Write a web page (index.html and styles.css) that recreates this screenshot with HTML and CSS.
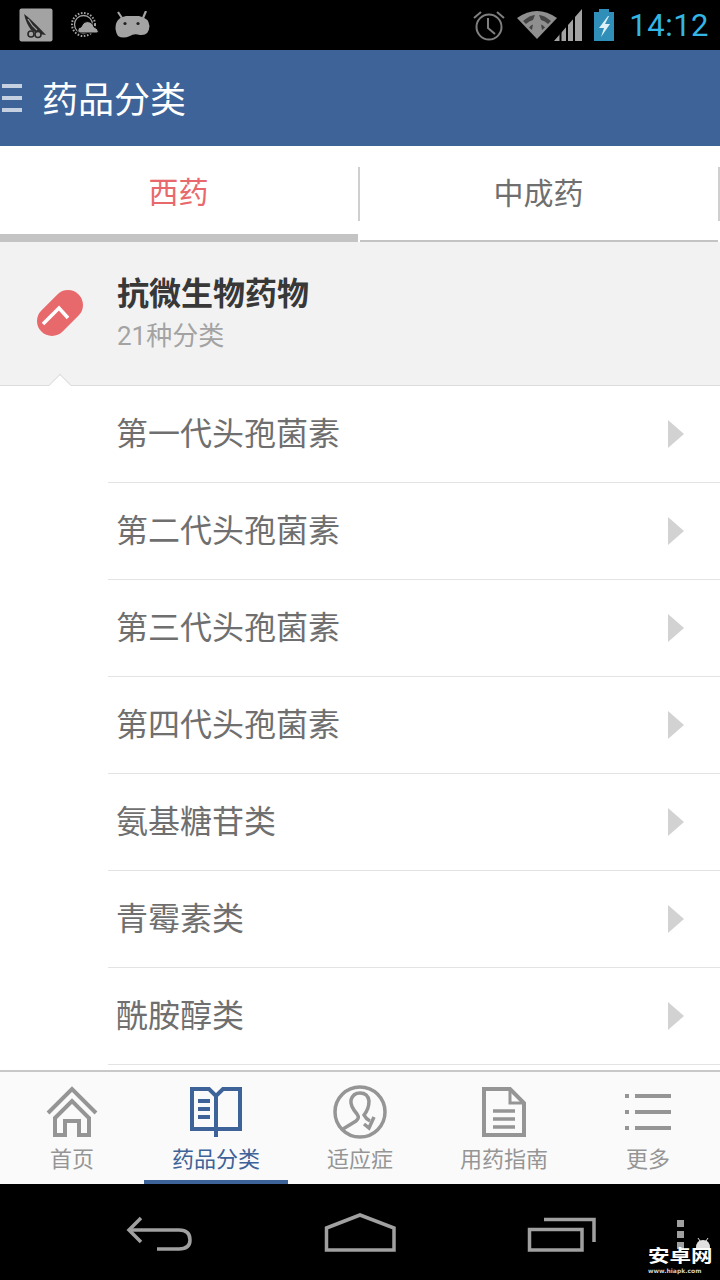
FILE: index.html
```html
<!DOCTYPE html>
<html lang="zh-CN">
<head>
    <meta charset="UTF-8">
    <meta name="viewport" content="width=device-width, initial-scale=1.0">
    <title>药品分类</title>
    <link rel="stylesheet" href="styles.css">
</head>
<body>
    <div class="screen">
        <div class="status">
            <div class="status-left">
                <svg width="34" height="34" viewBox="0 0 34 34">
                    <rect x="0.5" y="0.5" width="33" height="33" rx="2" fill="#a3a3a3"/>
                    <path d="M5 6 Q11 10 27 27 L20 26 L12 22 Q7 15 5 6Z" fill="#2a2a2a"/>
                    <path d="M9 11 Q13 18 18 22" fill="none" stroke="#a3a3a3" stroke-width="1.200"/>
                    <circle cx="12" cy="26" r="3" fill="#a3a3a3" stroke="#2a2a2a" stroke-width="1.600"/>
                    <circle cx="19" cy="26.500" r="3" fill="#a3a3a3" stroke="#2a2a2a" stroke-width="1.600"/>
                </svg>
                <svg class="weather" width="28" height="26" viewBox="0 0 28 26">
                    <circle cx="12.500" cy="12.500" r="11.500" fill="none" stroke="#a3a3a3" stroke-width="2" stroke-dasharray="1.600 1.600"/>
                    <circle cx="12.500" cy="12.500" r="9" fill="#000" stroke="#a3a3a3" stroke-width="1.300"/>
                    <path d="M7 20 Q6 16 10 15 Q13 8 19 10 Q23 12 23 15 Q27 16 27.500 20 L26 21 H9Z" fill="#a3a3a3" stroke="#000" stroke-width="1"/>
                </svg>
                <svg class="droid" width="35" height="28" viewBox="0 0 35 28">
                    <path d="M3 1 L7 7 M31 0 L28 7" stroke="#a3a3a3" stroke-width="2.200"/>
                    <path d="M0.500 18 Q0 7 11 5 L24 5 Q34 7 34.500 15 Q34 25 25 24 Q19 22 15 25 Q8 28 3 25 Q1 22 0.500 18Z" fill="#a3a3a3"/>
                    <circle cx="10" cy="12.500" r="1.600" fill="#222"/>
                    <circle cx="23" cy="12.500" r="1.600" fill="#222"/>
                </svg>
            </div>
            <div class="status-right">
                <svg width="32" height="32" viewBox="0 0 32 32">
                    <circle cx="16" cy="18" r="12.500" fill="none" stroke="#7f7f7f" stroke-width="2"/>
                    <path d="M15 9 L15 19 L22 25" fill="none" stroke="#7f7f7f" stroke-width="2"/>
                    <path d="M1 9 L8 3 M31 9 L24 3" stroke="#7f7f7f" stroke-width="2"/>
                </svg>
                <svg class="wifi" width="40" height="30" viewBox="0 0 40 30">
                    <path d="M0 8 Q20 -6 40 8 L20 29Z" fill="#8f8f8f"/>
                    <path d="M6 11 Q13 5 18 5 L16 10 Q12 11 9 14Z M34 11 Q27 5 22 5 L24 10 Q28 11 31 14Z M12 17.500 Q14 15 16 14.500 L15 20Z M28 17.500 Q26 15 24 14.500 L25 20Z" fill="#444"/>
                </svg>
                <svg class="signal" width="28" height="32" viewBox="0 0 28 32">
                    <path d="M0 32 L28 0 L28 32Z" fill="#a3a3a3"/>
                    <path d="M6.500 32 V22 M13 32 V16 M20 32 V7" stroke="#000" stroke-width="2"/>
                </svg>
                <svg class="battery" width="22" height="32" viewBox="0 0 22 32">
                    <path d="M6 0 H16 V3 H21 V32 H1 V3 H6Z" fill="#2f8fb8"/>
                    <path d="M15 7 L6 19 H11 L8 28 L17 15 H12 L16 7Z" fill="#dff1f8"/>
                </svg>
                <span class="clock">14:12</span>
            </div>
        </div>

        <div class="appbar">
            <div class="menu-bars"><i></i><i></i><i></i></div>
            <h1 class="appbar-title">药品分类</h1>
        </div>

        <div class="tabs">
            <div class="tab tab-on"><span>西药</span></div>
            <div class="tab"><span>中成药</span></div>
        </div>

        <div class="group-head">
            <svg class="pill" width="48" height="48" viewBox="0 0 48 48">
                <path d="M16 32 L32 16" stroke="#e8696b" stroke-width="30" stroke-linecap="round"/>
                <path d="M7 35 L23 19 L32 29" fill="none" stroke="#fff" stroke-width="3.500"/>
            </svg>
            <div class="group-text">
                <div class="group-name">抗微生物药物</div>
                <div class="group-count">21种分类</div>
            </div>
            <span class="notch"></span>
        </div>

        <ul class="list">
            <li class="row"><span class="row-text">第一代头孢菌素</span><span class="arrow"></span></li>
            <li class="row"><span class="row-text">第二代头孢菌素</span><span class="arrow"></span></li>
            <li class="row"><span class="row-text">第三代头孢菌素</span><span class="arrow"></span></li>
            <li class="row"><span class="row-text">第四代头孢菌素</span><span class="arrow"></span></li>
            <li class="row"><span class="row-text">氨基糖苷类</span><span class="arrow"></span></li>
            <li class="row"><span class="row-text">青霉素类</span><span class="arrow"></span></li>
            <li class="row"><span class="row-text">酰胺醇类</span><span class="arrow"></span></li>
        </ul>

        <div class="nav">
            <div class="nav-item">
                <svg width="54" height="54" viewBox="0 0 54 54" fill="none" stroke="#959595" stroke-width="4">
                    <path d="M3 28 L27 4 L51 28"/>
                    <path d="M10 33 L27 16 L44 33 V50 H34 V36 H20 V50 H10Z"/>
                </svg>
                <span>首页</span>
            </div>
            <div class="nav-item nav-on">
                <svg width="54" height="54" viewBox="0 0 54 54" fill="none" stroke="#3d6398" stroke-width="4">
                    <path d="M3 4 H20 L27 11 L34 4 H51 V44 H3Z"/>
                    <path d="M27 11 V52"/>
                    <path d="M9 16 H21 M9 24 H21 M9 32 H21"/>
                </svg>
                <span>药品分类</span>
            </div>
            <div class="nav-item">
                <svg width="54" height="54" viewBox="0 0 54 54" fill="none" stroke="#959595" stroke-width="3.500">
                    <circle cx="27" cy="27" r="25"/>
                    <path d="M10 44 L23 36 Q27 33 24 29 Q17 21 18 15 Q20 8 27 8 Q35 8 36 16 Q36 24 31 30 Q33 34 37 36"/>
                    <path d="M31 39 L36 43 L41 32"/>
                </svg>
                <span>适应症</span>
            </div>
            <div class="nav-item">
                <svg width="54" height="54" viewBox="0 0 54 54" fill="none" stroke="#959595" stroke-width="4">
                    <path d="M7 4 H33 L47 18 V50 H7Z"/>
                    <path d="M33 4 V18 H47" stroke-width="3"/>
                    <path d="M16 26 H38 M16 34 H38 M16 42 H38" stroke-width="3.500"/>
                </svg>
                <span>用药指南</span>
            </div>
            <div class="nav-item">
                <svg width="54" height="54" viewBox="0 0 54 54" fill="#959595">
                    <rect x="4" y="9" width="4" height="4"/><rect x="14" y="9" width="36" height="4"/>
                    <rect x="4" y="25" width="4" height="4"/><rect x="14" y="25" width="36" height="4"/>
                    <rect x="4" y="41" width="4" height="4"/><rect x="14" y="41" width="36" height="4"/>
                </svg>
                <span>更多</span>
            </div>
        </div>

        <div class="softkeys">
            <svg width="68" height="40" viewBox="0 0 68 40" fill="none" stroke="#a0a0a0" stroke-width="3.500">
                <path d="M16 6 L4 18 L16 30"/>
                <path d="M4 18 H54 Q65 18 65 28 Q65 37 54 37 H32"/>
            </svg>
            <svg width="72" height="40" viewBox="0 0 72 40" fill="none" stroke="#a0a0a0" stroke-width="3.500">
                <path d="M2.500 16 L36 3 L70 16 V38 H2.500Z"/>
            </svg>
            <svg width="70" height="40" viewBox="0 0 70 40" fill="none" stroke="#a0a0a0" stroke-width="3.500">
                <path d="M2.500 17.500 H55 V38 H2.500Z"/>
                <path d="M17 7.500 H67 V30"/>
            </svg>
            <div class="overflow-dots"><i></i><i></i><i></i></div>
            <div class="watermark">
                <svg class="wm-droid" width="16" height="10" viewBox="0 0 16 10">
                    <path d="M1 10 Q1 2 8 2 Q15 2 15 10Z" fill="#e0e0e0"/>
                    <path d="M3 0 L5 3 M13 0 L11 3" stroke="#e0e0e0" stroke-width="1"/>
                </svg>
                <span class="wm-name">安卓网</span>
                <span class="wm-url">www.hiapk.com</span>
            </div>
        </div>
    </div>
</body>
</html>
```
FILE: styles.css
```css
* {
    box-sizing: border-box;
}
html, body {
    margin: 0;
    padding: 0;
}
body {
    font-family: "Roboto", "Noto Sans CJK SC", sans-serif;
    background: #000;
}
.screen {
    width: 720px;
    height: 1280px;
    display: flex;
    flex-direction: column;
    overflow: hidden;
    background: #fff;
}

/* status bar */
.status {
    flex: 0 0 50px;
    background: #000;
    display: flex;
    justify-content: space-between;
    align-items: center;
    padding: 0 11px 0 19px;
}
.status-left {
    display: flex;
    align-items: center;
}
.weather {
    margin-left: 18px;
}
.droid {
    margin-left: 16px;
}
.status-right {
    display: flex;
    align-items: center;
}
.wifi {
    margin-left: 12px;
    margin-right: -3px;
}
.battery {
    margin-left: 11px;
}
.clock {
    margin-left: 14px;
    font-size: 31px;
    letter-spacing: 0.5px;
    color: #33b5e5;
}

/* app bar */
.appbar {
    flex: 0 0 96px;
    background: #3d6398;
    display: flex;
    align-items: center;
    padding-left: 2px;
}
.menu-bars {
    width: 20px;
    display: flex;
    flex-direction: column;
    gap: 8px;
}
.menu-bars i {
    display: block;
    height: 4px;
    background: #c5d0e0;
}
.appbar-title {
    margin: 0 0 2px 20px;
    font-size: 36px;
    font-weight: 400;
    color: #fff;
}

/* tabs */
.tabs {
    flex: 0 0 96px;
    display: flex;
    background: #fff;
}
.tab {
    width: 360px;
    height: 96px;
    display: flex;
    align-items: center;
    justify-content: center;
    padding: 0 3px 4px 0;
    font-size: 30px;
    color: #6f6f6f;
    position: relative;
    border-bottom: 2px solid #c4c4c4;
}
.tab:before {
    content: "";
    position: absolute;
    right: 0;
    top: 21px;
    width: 2px;
    height: 54px;
    background: #cfcfcf;
}
.tab:after {
    content: "";
    position: absolute;
    right: 0;
    bottom: -2px;
    width: 2px;
    height: 2px;
    background: #fff;
}
.tab-on {
    color: #e8696b;
    padding: 0 3px 0 0;
    border-bottom: 8px solid #c4c4c4;
}
.tab-on:after {
    height: 8px;
    bottom: -8px;
}

/* group header */
.group-head {
    flex: 0 0 144px;
    background: #f2f2f2;
    border-bottom: 1px solid #dcdcdc;
    display: flex;
    align-items: center;
    padding-left: 36px;
    position: relative;
}
.pill {
    flex: none;
    margin-bottom: 2px;
}
.group-text {
    margin-left: 33px;
}
.group-name {
    font-size: 32px;
    font-weight: 700;
    line-height: 44px;
    color: #383838;
}
.group-count {
    margin-top: 1px;
    font-size: 26px;
    line-height: 38px;
    color: #a3a3a3;
}
.notch {
    position: absolute;
    left: 52px;
    bottom: -8px;
    width: 16px;
    height: 16px;
    background: #fff;
    border-left: 1px solid #dcdcdc;
    border-top: 1px solid #dcdcdc;
    transform: rotate(45deg);
}

/* list */
.list {
    flex: 1;
    margin: 0;
    padding: 0 0 0 108px;
    list-style: none;
    overflow: hidden;
}
.row {
    height: 97px;
    display: flex;
    align-items: center;
    justify-content: space-between;
    padding: 0 36px 0 8px;
    border-bottom: 1px solid #e3e3e3;
    font-size: 32px;
    color: #6f6f6f;
}
.row-text {
    margin-bottom: 6px;
}
.arrow {
    width: 0;
    height: 0;
    border-left: 16px solid #d2d2d2;
    border-top: 14px solid transparent;
    border-bottom: 14px solid transparent;
}

/* bottom nav */
.nav {
    flex: 0 0 114px;
    display: flex;
    background: #fafafa;
    border-top: 2px solid #c8c8c8;
}
.nav-item {
    flex: 1;
    display: flex;
    flex-direction: column;
    align-items: center;
    height: 112px;
    padding-top: 13px;
    font-size: 22px;
    color: #959595;
}
.nav-item svg {
    flex: none;
}
.nav-item span {
    line-height: 30px;
    margin-top: 6px;
}
.nav-on {
    color: #3d6398;
    border-bottom: 4px solid #3d6398;
}

/* android keys */
.softkeys {
    flex: 0 0 96px;
    background: #000;
    display: flex;
    align-items: center;
    padding-left: 125px;
    gap: 131px;
    position: relative;
}
.overflow-dots {
    position: absolute;
    left: 677px;
    top: 36px;
    display: flex;
    flex-direction: column;
    gap: 4px;
}
.overflow-dots i {
    display: block;
    width: 7px;
    height: 7px;
    background: #a0a0a0;
}
.watermark {
    position: absolute;
    left: 648px;
    top: 54px;
    width: 66px;
    display: flex;
    flex-direction: column;
    color: #fff;
}
.wm-droid {
    align-self: flex-end;
    margin-right: 3px;
}
.wm-name {
    font-size: 21.500px;
    line-height: 17px;
    font-weight: 700;
    transform: scaleY(0.8);
    background: #000;
}
.wm-url {
    margin-top: 2px;
    font-size: 6px;
    line-height: 7px;
    font-weight: 700;
    font-family: "DejaVu Sans", sans-serif;
    color: #d0d0d0;
}
```
